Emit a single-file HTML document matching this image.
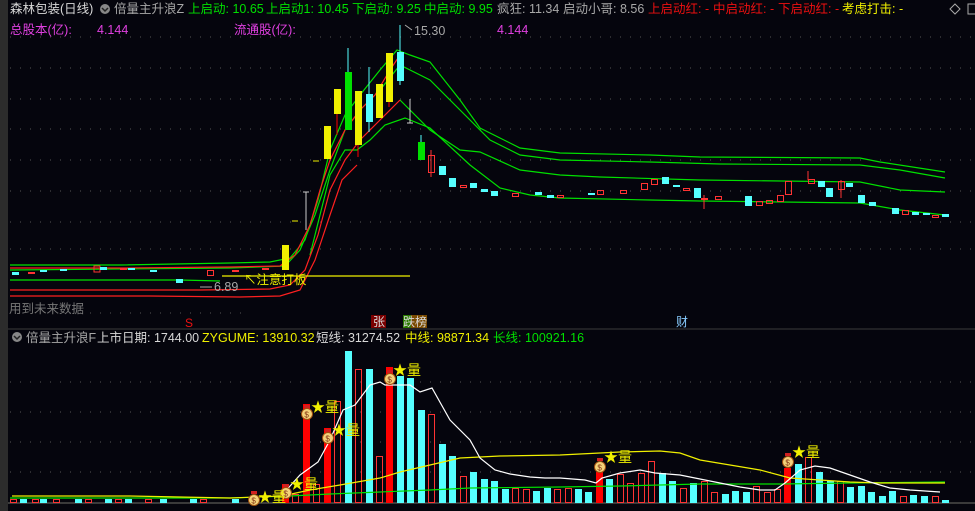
<!DOCTYPE html>
<html><head><meta charset="utf-8"><style>
body{margin:0;width:975px;height:511px;background:#05050d;overflow:hidden;position:relative;font-family:"Liberation Sans","Noto Sans CJK SC",sans-serif;font-size:12.5px}
.t{position:absolute;white-space:nowrap;line-height:14px}
.g{color:#00e000}.gr{color:#a8a8a8}.r{color:#ee1010}.y{color:#f0f000}.m{color:#e040e0}.w{color:#d8d8d8}
</style></head><body>
<div style="position:absolute;left:0;top:0;width:8px;height:511px;background:#2c2c2c"></div>
<svg width="975" height="511" style="position:absolute;left:0;top:0">
<g stroke="#555" stroke-dasharray="1,9" stroke-width="1">
<line x1="10" y1="37" x2="975" y2="37"/><line x1="10" y1="68" x2="975" y2="68"/><line x1="10" y1="99" x2="975" y2="99"/><line x1="10" y1="129" x2="975" y2="129"/><line x1="10" y1="160" x2="975" y2="160"/><line x1="10" y1="191" x2="975" y2="191"/><line x1="10" y1="222" x2="975" y2="222"/><line x1="10" y1="249" x2="975" y2="249"/><line x1="70" y1="313" x2="250" y2="313"/>
<line x1="10" y1="382" x2="975" y2="382"/><line x1="10" y1="412" x2="975" y2="412"/><line x1="10" y1="442" x2="975" y2="442"/><line x1="10" y1="472" x2="975" y2="472"/>
</g>
<line x1="8" y1="329" x2="975" y2="329" stroke="#3a3a3a"/>
<line x1="8" y1="503" x2="975" y2="503" stroke="#3a3a3a" stroke-width="2"/>
<g fill="none" stroke-width="1.2">
<polyline stroke="#00e000" points="10,265 120,265 230,263 270,262 290,258 305,240 318,200 330,150 345,115 360,95 380,70 397,50 410,55 430,62 460,100 480,128 520,148 560,153 650,155 700,157 860,158 880,162 945,172"/>
<polyline stroke="#00e000" points="10,270 230,268 285,266 300,250 315,215 330,170 345,130 360,110 380,90 400,65 430,80 460,110 490,140 520,155 560,160 650,162 720,164 860,165 900,170 945,178"/>
<polyline stroke="#00e000" points="400,100 430,130 460,150 480,152 520,170 560,175 600,177 700,180 860,182 900,190 945,192"/>
<polyline stroke="#00e000" points="310,255 330,175 345,150 357,150 370,140 385,125 405,118 430,128 470,165 500,188 530,195 560,198 650,200 700,201 860,203 900,210 945,215"/>
<polyline stroke="#00e000" points="10,280 180,280 220,281"/>
<polyline stroke="#ff2020" points="10,268 120,268 230,267 280,266 295,255 310,225 320,190 330,160 345,130 360,110 375,95 390,70 400,55"/>
<polyline stroke="#ff2020" points="10,290 200,290 270,289 290,285 305,270 318,235 330,190 345,160 360,140 380,120 400,100"/>
<polyline stroke="#ff2020" points="10,296 150,296 240,297 280,296 300,290 315,260 330,215 342,180 357,165"/>
<line x1="222" y1="276" x2="410" y2="276" stroke="#f0f000"/>
</g>
<g>
<rect x="282" y="245" width="7" height="25" fill="#f0f000"/>
<line x1="306" y1="192" x2="306" y2="230" stroke="#ccc"/><line x1="303" y1="192" x2="309" y2="192" stroke="#ccc"/>
<line x1="292" y1="221" x2="298" y2="221" stroke="#f0f000"/><line x1="313" y1="161" x2="319" y2="161" stroke="#f0f000"/>
<rect x="324" y="126" width="7" height="33" fill="#f0f000"/>
<line x1="337" y1="89" x2="337" y2="135" stroke="#f00"/><rect x="334" y="89" width="7" height="25" fill="#f0f000"/>
<line x1="348" y1="48" x2="348" y2="72" stroke="#5ff"/><rect x="345" y="72" width="7" height="58" fill="#00e000"/>
<line x1="358" y1="91" x2="358" y2="157" stroke="#f00"/><rect x="355" y="91" width="7" height="54" fill="#f0f000"/>
<line x1="369" y1="67" x2="369" y2="132" stroke="#5ff"/><rect x="366" y="94" width="7" height="28" fill="#5ff"/>
<rect x="376" y="84" width="7" height="34" fill="#f0f000"/>
<line x1="389" y1="53" x2="389" y2="107" stroke="#f00"/><rect x="386" y="53" width="7" height="49" fill="#f0f000"/>
<line x1="400" y1="25" x2="400" y2="85" stroke="#5ff"/><rect x="397" y="52" width="7" height="29" fill="#5ff"/>
<line x1="410" y1="99" x2="410" y2="123" stroke="#ccc"/><line x1="407" y1="123" x2="413" y2="123" stroke="#ccc"/>
<line x1="421" y1="135" x2="421" y2="160" stroke="#5ff"/><rect x="418" y="142" width="7" height="18" fill="#00e000"/>
<line x1="431" y1="150" x2="431" y2="177" stroke="#f33"/><rect x="428.5" y="155.5" width="6" height="17" fill="none" stroke="#f33"/>
<rect x="439" y="166" width="7" height="9" fill="#5ff"/><rect x="449" y="178" width="7" height="9" fill="#5ff"/>
<rect x="460.5" y="185.5" width="6" height="2" fill="none" stroke="#f33"/><rect x="470" y="183" width="7" height="5" fill="#5ff"/>
<g fill="#5ff"><rect x="481" y="189" width="7" height="3"/><rect x="491" y="191" width="7" height="5"/><rect x="535" y="192" width="7" height="3"/><rect x="547" y="195" width="7" height="3"/><rect x="588" y="193" width="7" height="2"/><rect x="662" y="177" width="7" height="7"/><rect x="673" y="185" width="7" height="2"/><rect x="694" y="188" width="7" height="10"/><rect x="745" y="196" width="7" height="10"/><rect x="818" y="181" width="7" height="6"/><rect x="826" y="188" width="7" height="9"/><rect x="846" y="183" width="7" height="4"/><rect x="858" y="195" width="7" height="8"/><rect x="869" y="202" width="7" height="4"/><rect x="892" y="208" width="7" height="6"/><rect x="912" y="212" width="7" height="3"/><rect x="923" y="213" width="7" height="2"/><rect x="942" y="214" width="7" height="3"/></g>
<g fill="none" stroke="#f33"><rect x="512.5" y="193.5" width="6" height="3"/><rect x="557.5" y="195.5" width="6" height="2"/><rect x="597.5" y="190.5" width="6" height="4"/><rect x="620.5" y="190.5" width="6" height="3"/><rect x="641.5" y="183.5" width="6" height="6"/><rect x="651.5" y="179.5" width="6" height="5"/><rect x="683.5" y="188.5" width="6" height="2"/><rect x="715.5" y="196.5" width="6" height="3"/><rect x="756.5" y="201.5" width="6" height="4"/><rect x="766.5" y="200.5" width="6" height="3"/><rect x="777.5" y="195.5" width="6" height="6"/><rect x="785.5" y="181.5" width="6" height="13"/><rect x="808.5" y="179.5" width="6" height="4"/><rect x="838.5" y="181.5" width="6" height="8"/><rect x="902.5" y="210.5" width="6" height="4"/><rect x="932.5" y="215.5" width="6" height="2"/><rect x="94" y="266" width="6" height="6"/><rect x="207.5" y="270.5" width="6" height="5"/></g>
<line x1="704" y1="195" x2="704" y2="209" stroke="#f33"/><rect x="701" y="198" width="7" height="2" fill="#f33"/>
<line x1="808" y1="171" x2="808" y2="180" stroke="#f33"/><line x1="841" y1="180" x2="841" y2="198" stroke="#f33"/>
<g fill="#5ff"><rect x="12" y="272" width="7" height="3"/><rect x="40" y="270" width="7" height="2"/><rect x="60" y="269" width="7" height="2"/><rect x="100" y="267" width="7" height="3"/><rect x="128" y="268" width="7" height="2"/><rect x="150" y="270" width="7" height="2"/><rect x="176" y="279" width="7" height="4"/></g>
<g fill="#f33"><rect x="28" y="272" width="7" height="2"/><rect x="120" y="268" width="7" height="2"/><rect x="232" y="270" width="7" height="2"/><rect x="262" y="268" width="7" height="2"/></g>
<line x1="405" y1="25" x2="412" y2="30" stroke="#aaa"/><line x1="200" y1="287" x2="212" y2="287" stroke="#aaa"/>
</g>
<g fill="#5ff">
<rect x="345" y="351" width="7" height="152"/><rect x="366" y="369" width="7" height="134"/><rect x="397" y="376" width="7" height="127"/><rect x="407" y="378" width="7" height="125"/><rect x="418" y="410" width="7" height="93"/><rect x="439" y="444" width="7" height="59"/><rect x="449" y="456" width="7" height="47"/><rect x="470" y="472" width="7" height="31"/><rect x="481" y="479" width="7" height="24"/><rect x="491" y="481" width="7" height="22"/><rect x="502" y="489" width="7" height="14"/><rect x="533" y="491" width="7" height="12"/><rect x="544" y="488" width="7" height="15"/><rect x="575" y="489" width="7" height="14"/><rect x="585" y="492" width="7" height="11"/><rect x="606" y="479" width="7" height="24"/><rect x="659" y="473" width="7" height="30"/><rect x="669" y="481" width="7" height="22"/><rect x="690" y="483" width="7" height="20"/><rect x="722" y="494" width="7" height="9"/><rect x="732" y="491" width="7" height="12"/><rect x="743" y="492" width="7" height="11"/><rect x="795" y="464" width="7" height="39"/><rect x="816" y="472" width="7" height="31"/><rect x="827" y="481" width="7" height="22"/><rect x="847" y="487" width="7" height="16"/><rect x="858" y="486" width="7" height="17"/><rect x="868" y="492" width="7" height="11"/><rect x="879" y="496" width="7" height="7"/><rect x="889" y="491" width="7" height="12"/><rect x="910" y="495" width="7" height="8"/><rect x="921" y="496" width="7" height="7"/><rect x="942" y="500" width="7" height="3"/>
<rect x="20" y="499" width="7" height="4"/><rect x="40" y="499" width="7" height="4"/><rect x="75" y="499" width="7" height="4"/><rect x="105" y="499" width="7" height="4"/><rect x="125" y="499" width="7" height="4"/><rect x="160" y="499" width="7" height="4"/><rect x="190" y="499" width="7" height="4"/><rect x="232" y="499" width="7" height="4"/></g>
<g fill="#f00"><rect x="303" y="404" width="7" height="99"/><rect x="324" y="428" width="7" height="75"/><rect x="386" y="367" width="7" height="136"/><rect x="282" y="484" width="7" height="19"/><rect x="596" y="472" width="7" height="31"/><rect x="784" y="468" width="7" height="35"/></g>
<g fill="none" stroke="#f33"><rect x="292.5" y="494.5" width="6" height="8"/><rect x="313.5" y="484.5" width="6" height="18"/><rect x="334.5" y="401.5" width="6" height="101"/><rect x="355.5" y="369.5" width="6" height="133"/><rect x="376.5" y="456.5" width="6" height="46"/><rect x="428.5" y="414.5" width="6" height="88"/><rect x="460.5" y="476.5" width="6" height="26"/><rect x="512.5" y="488.5" width="6" height="14"/><rect x="523.5" y="489.5" width="6" height="13"/><rect x="554.5" y="489.5" width="6" height="13"/><rect x="565.5" y="488.5" width="6" height="14"/><rect x="617.5" y="474.5" width="6" height="28"/><rect x="627.5" y="483.5" width="6" height="19"/><rect x="638.5" y="473.5" width="6" height="29"/><rect x="648.5" y="461.5" width="6" height="41"/><rect x="680.5" y="488.5" width="6" height="14"/><rect x="701.5" y="481.5" width="6" height="21"/><rect x="711.5" y="492.5" width="6" height="10"/><rect x="753.5" y="486.5" width="6" height="16"/><rect x="764.5" y="492.5" width="6" height="10"/><rect x="774.5" y="489.5" width="6" height="13"/><rect x="805.5" y="457.5" width="6" height="45"/><rect x="837.5" y="481.5" width="6" height="21"/><rect x="900.5" y="496.5" width="6" height="6"/><rect x="932.5" y="496.5" width="6" height="6"/><rect x="10.5" y="499.5" width="6" height="3"/><rect x="32.5" y="499.5" width="6" height="3"/><rect x="53.5" y="499.5" width="6" height="3"/><rect x="85.5" y="499.5" width="6" height="3"/><rect x="115.5" y="499.5" width="6" height="3"/><rect x="145.5" y="499.5" width="6" height="3"/><rect x="200.5" y="499.5" width="6" height="3"/></g>
<g fill="none" stroke-width="1.2">
<polyline stroke="#00e000" points="10,498 230,498 290,496 330,494 380,492 430,490 470,488 560,487 620,486 700,484 780,484 850,483 945,482"/>
<polyline stroke="#f0f000" points="12,496 130,496 230,498 282,496 310,490 340,485 380,478 400,472 430,465 460,458 480,457 500,456 560,455 620,452 660,451 680,453 700,460 730,465 760,470 790,478 820,480 850,482 880,483 945,483"/>
<polyline stroke="#fff" points="282,495 300,475 318,462 330,440 343,410 355,405 370,385 380,382 385,385 400,385 410,385 420,392 432,388 450,420 470,440 480,458 495,470 510,474 530,477 545,478 560,478 585,480 596,483 602,478 620,473 640,470 655,473 680,475 700,479 720,483 740,487 760,490 775,490 785,483 800,470 815,466 830,468 850,475 870,482 890,488 910,490 940,492"/>
</g>
<defs><g id="b"><circle cx="0" cy="0" r="5.5" fill="#f3d27a" stroke="#a05010"/><rect x="-3" y="-9" width="6" height="3" fill="#d02020"/><text x="-2.6" y="3.5" font-size="8" fill="#803010" font-family="Liberation Sans,sans-serif">$</text></g></defs>
<g font-size="14" fill="#f0f000" font-family="Liberation Sans,Noto Sans CJK SC,sans-serif">
<use href="#b" x="307" y="414"/><text x="311" y="412">★量</text>
<use href="#b" x="328" y="438"/><text x="332" y="435">★量</text>
<use href="#b" x="390" y="379"/><text x="393" y="375">★量</text>
<use href="#b" x="600" y="467"/><text x="604" y="462">★量</text>
<use href="#b" x="788" y="462"/><text x="792" y="457">★量</text>
<use href="#b" x="286" y="493"/><text x="290" y="489">★量</text>
<use href="#b" x="254" y="500"/><text x="258" y="502">★量</text>
</g>
<circle cx="105" cy="9" r="5" fill="#888"/><path d="M102,8 l3,3 l3,-3" stroke="#222" fill="none" stroke-width="1.5"/>
<circle cx="17" cy="337" r="5" fill="#888"/><path d="M14,336 l3,3 l3,-3" stroke="#222" fill="none" stroke-width="1.5"/>
<path d="M955,4 l5,5 l-5,5 l-5,-5z" fill="none" stroke="#aaa"/><rect x="968" y="4" width="9" height="10" fill="none" stroke="#aaa"/>
<rect x="371" y="315" width="15" height="13" fill="#7a0000"/><rect x="403" y="315" width="8" height="13" fill="#2a7a00"/><rect x="411" y="315" width="16" height="13" fill="#7a4a00"/>
</svg>
<div class="t w" style="left:10px;top:2px">森林包装(日线)</div>
<div class="t gr" style="left:114px;top:2px">倍量主升浪Z</div>
<div class="t g" style="left:188px;top:2px">上启动: 10.65</div>
<div class="t g" style="left:266px;top:2px">上启动1: 10.45</div>
<div class="t g" style="left:352px;top:2px">下启动: 9.25</div>
<div class="t g" style="left:424px;top:2px">中启动: 9.95</div>
<div class="t gr" style="left:497px;top:2px">疯狂: 11.34</div>
<div class="t gr" style="left:563px;top:2px">启动小哥: 8.56</div>
<div class="t r" style="left:648px;top:2px">上启动红: -</div>
<div class="t r" style="left:713px;top:2px">中启动红: -</div>
<div class="t r" style="left:778px;top:2px">下启动红: -</div>
<div class="t y" style="left:842px;top:2px">考虑打击: -</div>
<div class="t m" style="left:10px;top:23px">总股本(亿):</div>
<div class="t m" style="left:97px;top:23px">4.144</div>
<div class="t m" style="left:234px;top:23px">流通股(亿):</div>
<div class="t m" style="left:497px;top:23px">4.144</div>
<div class="t gr" style="left:414px;top:24px">15.30</div>
<div class="t gr" style="left:214px;top:280px">6.89</div>
<div class="t y" style="left:244px;top:273px">↖注意打板</div>
<div class="t" style="left:9px;top:302px;color:#777">用到未来数据</div>
<div class="t r" style="left:185px;top:316px;font-size:12px">S</div>
<div class="t w" style="left:373px;top:315px;font-size:12px">张</div>
<div class="t w" style="left:403px;top:315px;font-size:12px">跌榜</div>
<div class="t" style="left:676px;top:315px;font-size:12px;color:#8cf">财</div>
<div class="t gr" style="left:26px;top:331px">倍量主升浪F</div>
<div class="t w" style="left:97px;top:331px">上市日期: 1744.00</div>
<div class="t y" style="left:202px;top:331px">ZYGUME: 13910.32</div>
<div class="t w" style="left:316px;top:331px">短线: 31274.52</div>
<div class="t y" style="left:405px;top:331px">中线: 98871.34</div>
<div class="t g" style="left:493px;top:331px">长线: 100921.16</div>
</body></html>
